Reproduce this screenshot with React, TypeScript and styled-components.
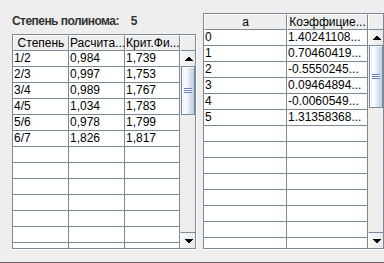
import React from "react";
import styled, { createGlobalStyle } from "styled-components";

const GRID = "#7a8a99";

const GlobalStyle = createGlobalStyle`
  html, body { margin: 0; padding: 0; background: #eeeeee; }
  body {
    font-family: "Liberation Sans", Arial, sans-serif;
    font-size: 12px;
    color: #000;
  }
`;

const Window = styled.div`
  width: 384px;
  height: 263px;
  background: #eeeeee;
  display: flex;
  flex-direction: column;
  overflow: hidden;
`;

const Content = styled.div`
  flex: 1;
  display: flex;
  align-items: flex-start;
  min-height: 0;
`;

const BottomEdge = styled.div`
  height: 1px;
  flex: none;
  background: #6f5b66;
`;

const LeftPanel = styled.div`
  margin-left: 12px;
  display: flex;
  flex-direction: column;
  flex: none;
`;

const RightPanel = styled.div`
  margin-left: 6px;
  margin-top: 13px;
  flex: none;
`;

const Title = styled.div`
  height: 34px;
  box-sizing: border-box;
  padding-top: 14px;
  line-height: 14px;
  font-size: 12px;
  letter-spacing: -0.55px;
  font-weight: bold;
  color: #333333;
  white-space: nowrap;
  display: flex;
`;

const TitleValue = styled.span`
  margin-left: 12px;
`;

const PaneOuter = styled.div<{ $w: number; $h: number }>`
  width: ${(p) => p.$w}px;
  height: ${(p) => p.$h}px;
  box-sizing: border-box;
  border-right: 1px solid #ffffff;
  border-bottom: 1px solid #ffffff;
  display: flex;
  flex: none;
`;

const PaneInner = styled.div`
  flex: 1;
  border: 1px solid ${GRID};
  display: flex;
  flex-direction: column;
  min-width: 0;
  min-height: 0;
  overflow: hidden;
`;

const HeaderRow = styled.div`
  display: flex;
  height: 16px;
  flex: none;
`;

const HeaderCell = styled.div<{ $w: number; $corner?: boolean }>`
  width: ${(p) => p.$w}px;
  flex: none;
  box-sizing: border-box;
  border-top: 1px solid #ffffff;
  border-left: 1px solid #ffffff;
  border-right: ${(p) => (p.$corner ? "none" : `1px solid ${GRID}`)};
  border-bottom: 1px solid ${GRID};
  background: #eeeeee;
  text-align: center;
  line-height: 14px;
  white-space: nowrap;
  overflow: hidden;
  color: #000;
`;

const Body = styled.div`
  flex: 1;
  display: flex;
  min-height: 0;
`;

const Grid = styled.div<{ $cols: string }>`
  display: grid;
  grid-template-columns: ${(p) => p.$cols};
  grid-auto-rows: 16px;
  align-content: start;
  overflow: hidden;
  background: #ffffff;
  flex: none;
`;

const Cell = styled.div`
  box-sizing: border-box;
  border-right: 1px solid ${GRID};
  border-bottom: 1px solid ${GRID};
  padding-left: 1px;
  line-height: 15px;
  white-space: nowrap;
  overflow: hidden;
`;

const ScrollBar = styled.div`
  width: 15px;
  flex: none;
  display: flex;
  flex-direction: column;
  background: #eeeeee;
`;

const ArrowButton = styled.div<{ $down?: boolean }>`
  height: 16px;
  flex: none;
  box-sizing: border-box;
  border-top: ${(p) => (p.$down ? `1px solid ${GRID}` : "none")};
  border-bottom: ${(p) => (p.$down ? "none" : `1px solid ${GRID}`)};
  border-left: 1px solid #ffffff;
  background: linear-gradient(to right, #f7f7f7, #e9e9e9);
  display: flex;
  align-items: center;
  justify-content: center;
  padding-left: 1px;
`;

const Track = styled.div`
  flex: 1;
  display: flex;
  flex-direction: column;
  min-height: 0;
`;

const Thumb = styled.div<{ $h: number }>`
  height: ${(p) => p.$h}px;
  flex: none;
  box-sizing: border-box;
  margin-left: 1px;
  border: 1px solid ${GRID};
  border-top: none;
  box-shadow: inset 1px 1px 0 #ffffff;
  background: linear-gradient(
    to right,
    #dde8f3 0%,
    #ffffff 30%,
    #dde8f3 60%,
    #b8cfe5 100%
  );
  display: flex;
  align-items: center;
  justify-content: center;
`;

const Grip = styled.div`
  width: 8px;
  height: 5px;
  background: repeating-linear-gradient(
    to bottom,
    #6382bf 0px,
    #6382bf 1px,
    #ffffff 1px,
    #ffffff 2px
  );
`;

const Arrow: React.FC<{ down?: boolean }> = ({ down }) => (
  <svg width="8" height="4" viewBox="0 0 8 4" shapeRendering="crispEdges">
    {down ? (
      <g fill="#000">
        <rect x="0" y="0" width="8" height="1" />
        <rect x="1" y="1" width="6" height="1" />
        <rect x="2" y="2" width="4" height="1" />
        <rect x="3" y="3" width="2" height="1" />
      </g>
    ) : (
      <g fill="#000">
        <rect x="3" y="0" width="2" height="1" />
        <rect x="2" y="1" width="4" height="1" />
        <rect x="1" y="2" width="6" height="1" />
        <rect x="0" y="3" width="8" height="1" />
      </g>
    )}
  </svg>
);

type TableProps = {
  width: number;
  height: number;
  columns: { title: string; width: number }[];
  rows: string[][];
  rowCount: number;
  thumbHeight: number;
};

const Table: React.FC<TableProps> = ({ width, height, columns, rows, rowCount, thumbHeight }) => {
  const cols = columns.map((c) => `${c.width}px`).join(" ");
  const all: string[][] = [];
  for (let i = 0; i < rowCount; i++) {
    all.push(rows[i] ?? columns.map(() => ""));
  }
  return (
    <PaneOuter $w={width} $h={height}>
      <PaneInner>
        <HeaderRow>
          {columns.map((c) => (
            <HeaderCell key={c.title} $w={c.width}>
              {c.title}
            </HeaderCell>
          ))}
          <HeaderCell $w={15} $corner />
        </HeaderRow>
        <Body>
          <Grid $cols={cols}>
            {all.map((r, i) =>
              r.map((v, j) => <Cell key={`${i}-${j}`}>{v}</Cell>)
            )}
          </Grid>
          <ScrollBar>
            <ArrowButton>
              <Arrow />
            </ArrowButton>
            <Track>
              <Thumb $h={thumbHeight}>
                <Grip />
              </Thumb>
            </Track>
            <ArrowButton $down>
              <Arrow down />
            </ArrowButton>
          </ScrollBar>
        </Body>
      </PaneInner>
    </PaneOuter>
  );
};

const leftRows = [
  ["1/2", "0,984", "1,739"],
  ["2/3", "0,997", "1,753"],
  ["3/4", "0,989", "1,767"],
  ["4/5", "1,034", "1,783"],
  ["5/6", "0,978", "1,799"],
  ["6/7", "1,826", "1,817"],
];

const rightRows = [
  ["0", "1.40241108..."],
  ["1", "0.70460419..."],
  ["2", "-0.5550245..."],
  ["3", "0.09464894..."],
  ["4", "-0.0060549..."],
  ["5", "1.31358368..."],
];

export default function App() {
  return (
    <>
      <GlobalStyle />
      <Window>
        <Content>
          <LeftPanel>
            <Title>
              <span>Степень полинома:</span>
              <TitleValue>5</TitleValue>
            </Title>
            <Table
              width={185}
              height={216}
              columns={[
                { title: "Степень", width: 56 },
                { title: "Расчита...", width: 56 },
                { title: "Крит.Фи...", width: 55 },
              ]}
              rows={leftRows}
              rowCount={14}
              thumbHeight={48}
            />
          </LeftPanel>
          <RightPanel>
            <Table
              width={182}
              height={237}
              columns={[
                { title: "a", width: 83 },
                { title: "Коэффицие...", width: 81 },
              ]}
              rows={rightRows}
              rowCount={15}
              thumbHeight={62}
            />
          </RightPanel>
        </Content>
        <BottomEdge />
      </Window>
    </>
  );
}
